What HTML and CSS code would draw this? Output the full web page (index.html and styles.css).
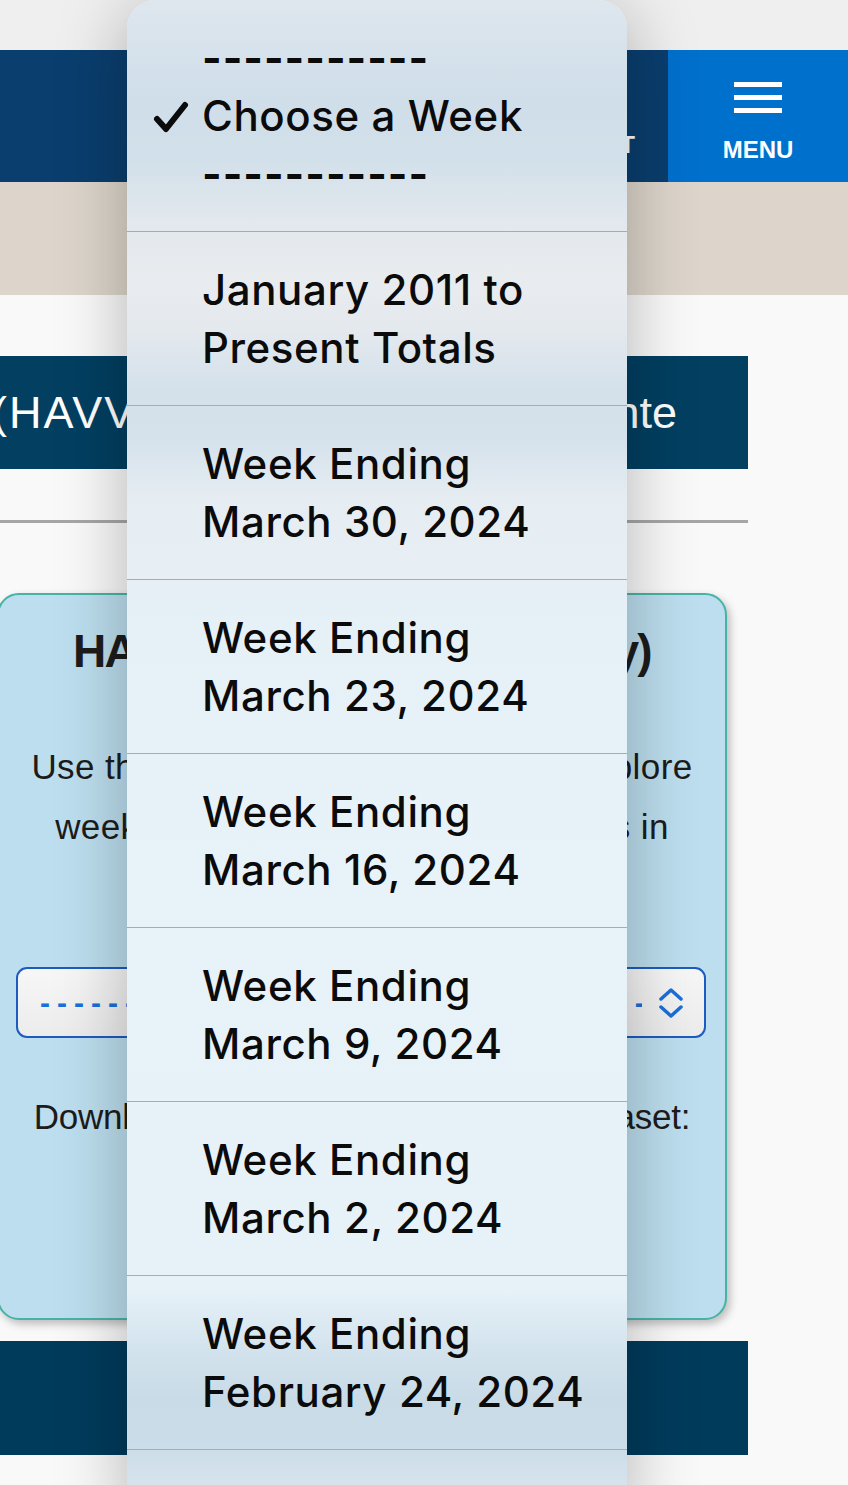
FILE: index.html
```html
<!DOCTYPE html>
<html lang="en">

<head>
    <meta charset="utf-8">
    <meta name="viewport" content="width=device-width, initial-scale=1.0">
    <title>HAVV Weekly Totals</title>
    <link rel="stylesheet" href="styles.css">
</head>

<body>
    <div class="topstrip"></div>
    <header class="site-header">
        <div class="account">ACCOUNT</div>
        <button class="menu">
            <svg class="bars" width="48" height="31" viewBox="0 0 48 31">
                <rect x="0" y="0" width="48" height="5" fill="#fff" />
                <rect x="0" y="13" width="48" height="5" fill="#fff" />
                <rect x="0" y="26" width="48" height="5" fill="#fff" />
            </svg>
            <span>MENU</span>
        </button>
    </header>
    <div class="beige"></div>

    <main>
        <h1 class="banner"><span class="left">(HAVV) Weekly</span><span>Totals Presente</span></h1>
        <hr class="rule">

        <section class="card">
            <h2>HAVV Transactions (Weekly)</h2>
            <p class="intro">Use the dropdown menu below to explore<br>weekly HAVV transaction data totals in<br>each state.</p>
            <div class="picker">
                <span class="picked"><span class="dash">-----------</span> Choose a Week <span class="dash">-----------</span></span>
                <svg class="updown" width="26" height="30" viewBox="0 0 26 30">
                    <path d="M3 11 L13 2 L23 11" fill="none" stroke="#1a6fd9" stroke-width="3.5" stroke-linecap="round" stroke-linejoin="round" />
                    <path d="M3 19 L13 28 L23 19" fill="none" stroke="#1a6fd9" stroke-width="3.5" stroke-linecap="round" stroke-linejoin="round" />
                </svg>
            </div>
            <p class="download">Download the entire HAVV weekly dataset:</p>
            <p class="links">CSV | XLSX</p>
        </section>

        <div class="banner2"></div>
    </main>

    <!-- native picker list, drawn over the page -->
    <div class="popup">
        <div class="row first">
            <svg class="check" width="36" height="32" viewBox="0 0 36 32">
                <path d="M4 18 L13 28 L32 4" fill="none" stroke="#0b0b0b" stroke-width="6" stroke-linecap="round" stroke-linejoin="round" />
            </svg>
            <span class="dashes">-----------</span><br>
            Choose a Week<br>
            <span class="dashes">-----------</span>
        </div>
        <div class="row">January 2011 to<br>Present Totals</div>
        <div class="row">Week Ending<br>March 30, 2024</div>
        <div class="row">Week Ending<br>March 23, 2024</div>
        <div class="row">Week Ending<br>March 16, 2024</div>
        <div class="row">Week Ending<br>March 9, 2024</div>
        <div class="row">Week Ending<br>March 2, 2024</div>
        <div class="row">Week Ending<br>February 24, 2024</div>
        <div class="row">Week Ending<br>February 17, 2024</div>
    </div>
</body></html>
```

FILE: styles.css
```css
body {
    margin: 0;
    width: 848px;
    height: 1485px;
    overflow: hidden;
    position: relative;
    background: #f9f9f9;
    font-family: "Liberation Sans", Arial, sans-serif;
}

.topstrip {
    height: 50px;
    background: #efefef;
}

.site-header {
    height: 132px;
    display: flex;
    justify-content: flex-end;
    background: #0a3e6e;
}

.account {
    align-self: flex-end;
    margin: 0 33px 23px 0;
    color: #fff;
    font-weight: bold;
    font-size: 24px;
}

.menu {
    width: 180px;
    border: 0;
    padding: 32px 0 0;
    background: #0070cd;
    color: #fff;
    font-family: "Liberation Sans", Arial, sans-serif;
    font-weight: bold;
    font-size: 24px;
    display: flex;
    flex-direction: column;
    align-items: center;
}

.menu span {
    margin-top: 23px;
    line-height: 28px;
}

.beige {
    height: 113px;
    background: #ddd5cb;
}

main {
    padding-top: 61px;
}

.banner {
    margin: 0;
    width: 748px;
    height: 113px;
    box-sizing: border-box;
    padding-right: 71px;
    background: #023f61;
    color: #fff;
    font-size: 45px;
    font-weight: normal;
    white-space: nowrap;
    display: flex;
    align-items: center;
    justify-content: space-between;
}

.banner .left {
    margin-left: -8px;
    letter-spacing: 2px;
}

.rule {
    width: 748px;
    margin: 51px 0 0;
    border: 0;
    height: 3px;
    background: #a6a6a6;
}

.card {
    margin: 70px 0 0 -3px;
    width: 730px;
    height: 727px;
    box-sizing: border-box;
    background: #bcdeee;
    border: 2px solid #47b3a6;
    border-radius: 22px;
    box-shadow: 3px 4px 8px rgba(0, 0, 0, 0.25);
    text-align: center;
    color: #1c1c1c;
}

.card h2 {
    margin: 30px 0 0;
    font-size: 46px;
    line-height: 53px;
    letter-spacing: -1.7px;
}

.intro {
    margin: 59px 0 0;
    font-size: 35px;
    line-height: 60px;
    letter-spacing: 0.4px;
}

.picker {
    margin: 50px 19px 0 17px;
    height: 71px;
    box-sizing: border-box;
    border: 2px solid #1d5cbf;
    border-radius: 11px;
    background: linear-gradient(#f7f7f7, #ececec);
    padding: 0 20px 0 22px;
    display: flex;
    align-items: center;
    color: #1a6fd9;
    font-size: 30px;
    font-weight: bold;
    white-space: nowrap;
}

.picked {
    flex: 1;
    overflow: hidden;
    margin-right: 16px;
    text-align: left;
}

.dash {
    letter-spacing: 7px;
}

.updown {
    flex: none;
}

.download {
    margin: 58px 0 0;
    font-size: 35px;
    line-height: 42px;
    letter-spacing: -0.2px;
}

.links {
    margin: 30px 0 0;
    font-size: 30px;
    color: #0a4f9e;
}

.banner2 {
    margin-top: 21px;
    width: 748px;
    height: 114px;
    background: #003b5c;
}

.popup {
    position: absolute;
    left: 127px;
    top: 0;
    width: 500px;
    height: 1520px;
    border-radius: 28px 28px 0 0;
    overflow: hidden;
    background: linear-gradient(#dfe7ee 0px, #d8e3ec 40px, #cfdee9 100px, #d2e0ea 160px,
            #e2e8ed 220px, #e9ecef 280px, #e4e9ee 330px, #d4e1eb 390px, #d5e2ec 440px,
            #e6edf2 500px, #e8eff4 560px, #e5f0f7 620px, #e8f2f9 900px, #e6f1f8 1290px,
            #d3e3ed 1350px, #c8dbe7 1400px, #cadce8 1440px, #d6e3ec 1485px, #dce7ee 1520px);
    box-shadow: 0 10px 70px rgba(0, 0, 0, 0.28);
    font-family: Inter, "Noto Sans", sans-serif;
    font-weight: 500;
    font-size: 42px;
    letter-spacing: 0.6px;
    line-height: 58px;
    color: #0b0b0b;
}

.row {
    position: relative;
    padding: 29px 0 28px 75px;
    border-bottom: 1px solid #a3adb7;
}

.check {
    position: absolute;
    left: 26px;
    top: 101px;
}

.dashes {
    font-weight: 700;
    letter-spacing: 1px;
}
```
